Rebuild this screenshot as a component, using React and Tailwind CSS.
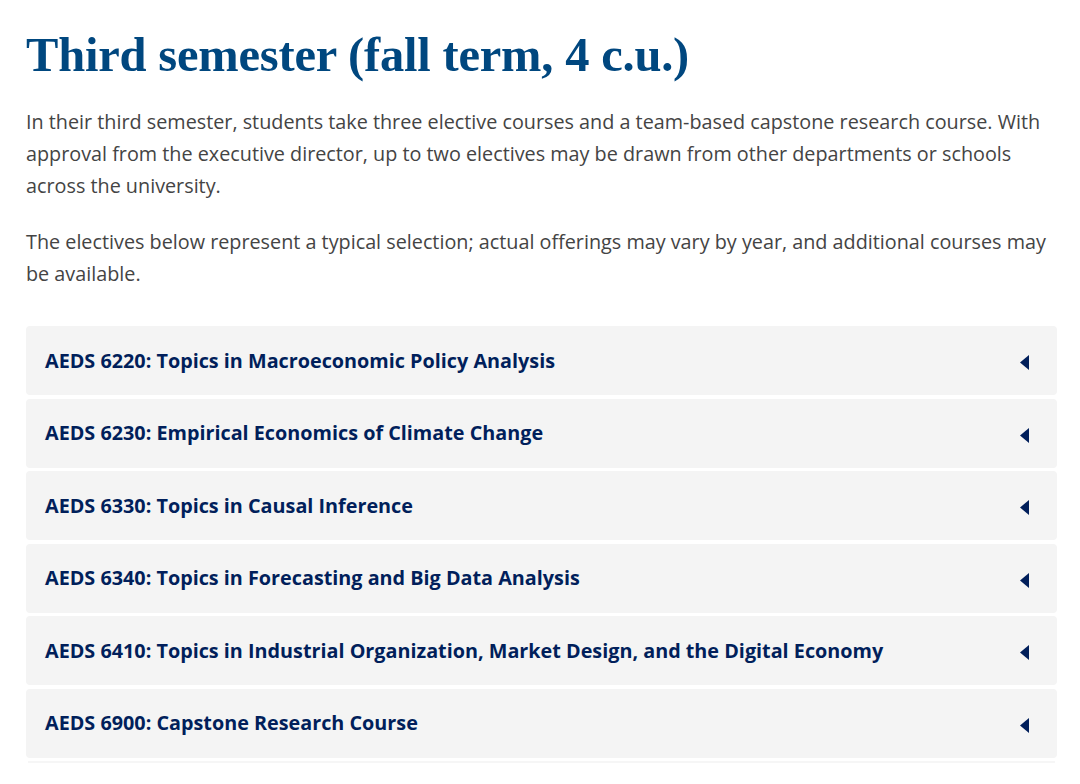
export default function App() {
  const items = [
    "AEDS 6220: Topics in Macroeconomic Policy Analysis",
    "AEDS 6230: Empirical Economics of Climate Change",
    "AEDS 6330: Topics in Causal Inference",
    "AEDS 6340: Topics in Forecasting and Big Data Analysis",
    "AEDS 6410: Topics in Industrial Organization, Market Design, and the Digital Economy",
    "AEDS 6900: Capstone Research Course",
  ];
  return (
    <div className="h-[784px] overflow-hidden bg-white pl-[26px] pr-[23px] pt-[24px]">
      <h1 className="text-[48.5px] leading-[62px] font-bold text-[#00477f] [font-family:'Liberation_Serif',serif] tracking-[-0.2px]">
        Third semester (fall term, 4 c.u.)
      </h1>
      <div className="mt-[20px] text-[19.8px] leading-[32px] text-[#444] [font-family:'Open_Sans',sans-serif]">
        <p>
          In their third semester, students take three elective courses and a team-based capstone research course. With
          approval from the executive director, up to two electives may be drawn from other departments or schools
          across the university.
        </p>
        <p className="mt-[24px]">
          The electives below represent a typical selection; actual offerings may vary by year, and additional courses may
          be available.
        </p>
      </div>
      <div className="mt-[36px] flex flex-col gap-[3.5px]">
        {items.map((t) => (
          <div
            key={t}
            className="flex h-[69px] shrink-0 items-center justify-between rounded-[4px] bg-[#f4f4f4] pl-[19px] pr-[28px]"
          >
            <span className="text-[19.8px] font-bold text-[#011f5b] [font-family:'Open_Sans',sans-serif]">{t}</span>
            <svg width="9" height="15" viewBox="0 0 9 15" className="mt-[4px]">
              <path d="M9 0 L0 7.5 L9 15 Z" fill="#011f5b" />
            </svg>
          </div>
        ))}
        <div className="mx-[2px] h-[2px] bg-[#f6f6f6]" />
      </div>
    </div>
  );
}
